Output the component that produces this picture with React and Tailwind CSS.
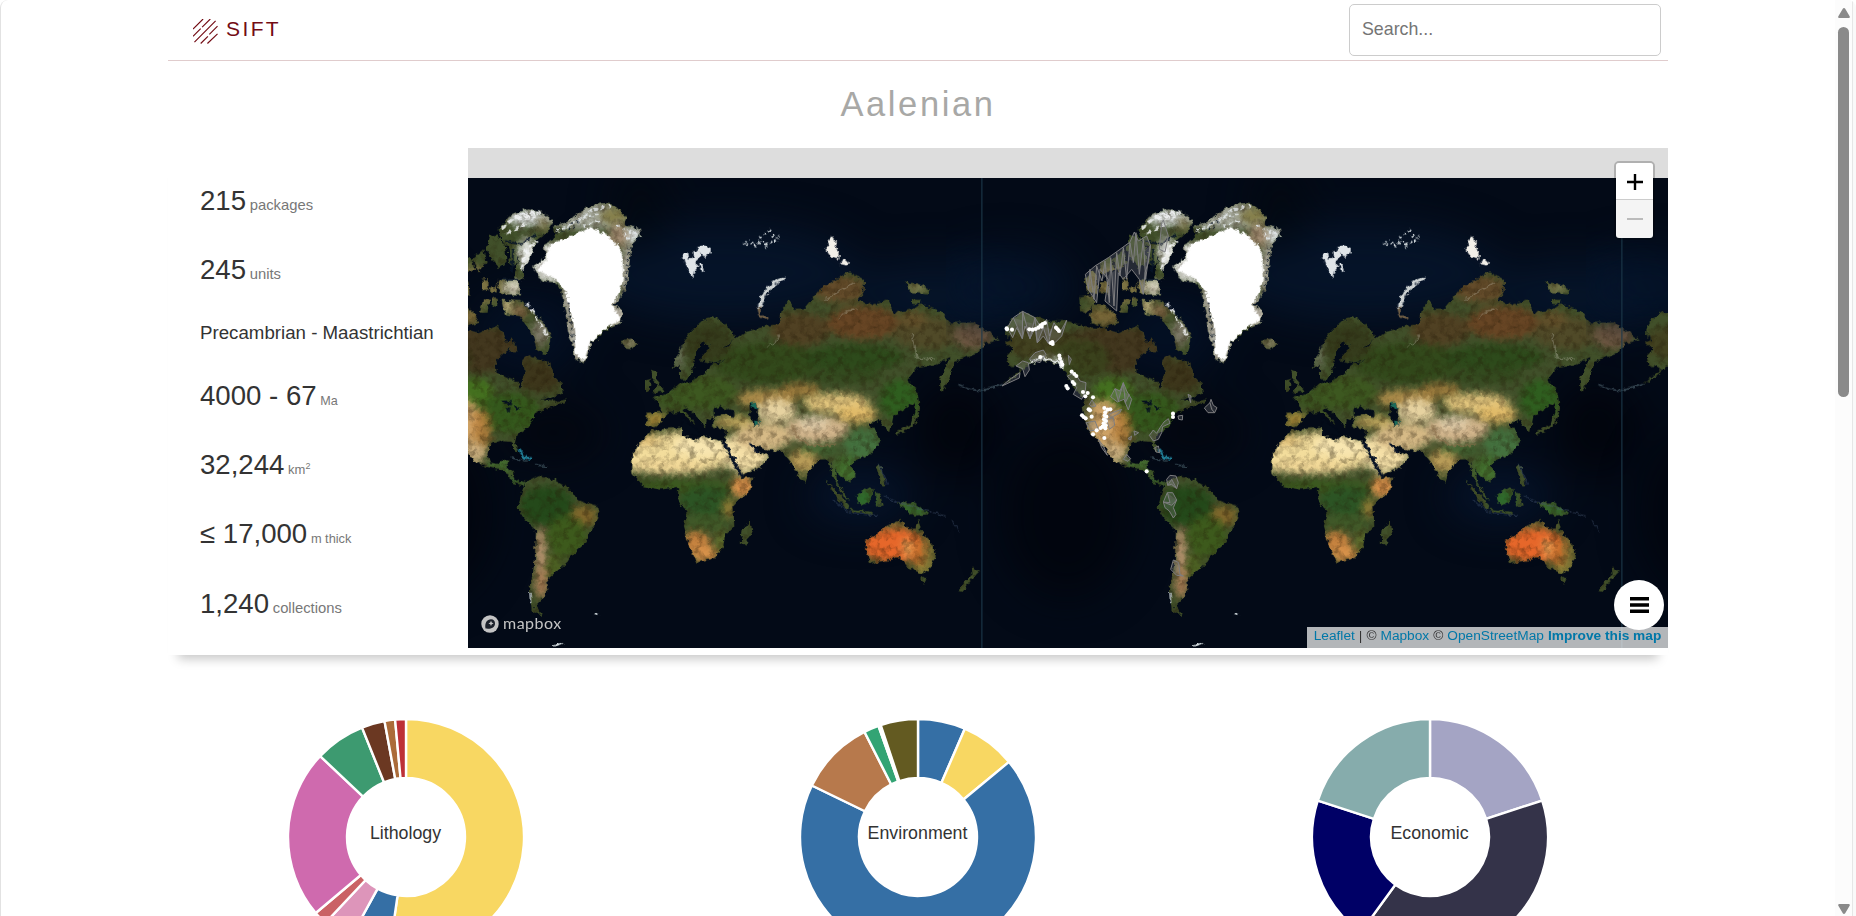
import React from "react";

const WEST_LAND = [
  "M78 590 100 580 78 565 82 540 95 520 128 498 170 512 215 528 260 524 330 545 370 548 410 560 450 550 470 540 490 560 500 590 515 575 522 600 492 620 465 645 470 680 500 695 530 705 540 730 548 700 555 680 550 640 565 628 600 640 625 650 640 690 665 715 668 742 640 752 600 762 645 766 678 760 672 772 640 780 610 790 585 802 575 825 555 850 530 868 525 890 536 912 528 922 515 888 480 885 450 895 442 925 450 950 475 955 490 940 505 945 495 965 515 975 520 1000 540 1010 560 1002 548 1018 520 1010 505 985 480 972 440 962 400 942 380 910 352 880 325 850 315 820 308 780 320 752 300 745 280 720 260 682 235 655 180 640 150 655 110 680 66 720 110 688 130 670 110 665 85 655 80 630 100 610Z",
  "M298 455 330 448 347 468 320 502 300 495Z",
  "M338 475 375 480 400 500 417 530 370 545 335 530 330 505Z",
  "M312 395 345 375 352 440 325 440Z",
  "M360 350 392 335 405 372 365 385Z",
  "M360 410 385 408 388 445 362 440Z",
  "M395 340 430 310 440 350 415 375Z",
  "M425 402 445 400 445 430 425 432Z",
  "M450 270 470 265 495 300 500 350 478 365 455 340 440 310Z",
  "M505 290 535 300 530 350 510 360Z",
  "M430 460 447 462 443 500 420 500Z",
  "M455 455 475 460 470 482 455 480Z",
  "M450 425 468 424 466 440 452 440Z",
  "M472 250 510 210 560 190 610 200 638 225 620 260 592 280 572 330 548 372 550 400 520 402 536 330 490 290Z",
  "M475 400 535 400 540 445 485 445 470 420Z",
  "M485 462 540 465 582 500 612 530 636 578 620 628 590 612 580 570 540 510 495 505Z",
  "M505 585 525 592 535 615 510 615Z",
];
const EAST_LAND = [
  "M258 240 300 230 330 205 370 180 415 170 445 180 480 215 470 235 520 248 522 270 495 295 488 350 480 420 465 450 440 480 468 492 462 530 415 555 375 590 352 652 325 635 318 590 305 560 300 520 285 440 268 410 225 405 200 360 240 335 230 295 265 275Z",
  "M175 1010 215 990 260 1000 310 1030 330 1060 395 1085 400 1105 380 1140 360 1185 330 1210 300 1250 265 1280 240 1300 245 1330 225 1360 205 1380 228 1412 195 1395 190 1330 205 1240 208 1150 175 1120 153 1085 165 1040Z",
  "M555 855 600 848 645 845 648 868 695 885 702 870 765 885 790 930 820 985 825 996 860 992 850 1030 800 1080 803 1140 775 1165 770 1200 745 1235 690 1250 665 1190 652 1140 660 1100 635 1060 635 1022 580 1030 530 1020 497 980 497 930 520 890Z",
  "M778 850 830 840 850 885 870 915 907 930 880 965 825 987 800 940 775 895Z",
  "M850 1125 857 1150 838 1195 822 1190 828 1150Z",
  "M540 800 587 798 575 770 560 755 600 745 640 712 665 710 720 682 728 660 775 645 780 605 805 580 830 560 900 540 940 535 945 490 965 465 985 492 1010 490 1030 465 1060 430 1110 400 1145 378 1192 402 1190 440 1170 462 1220 478 1262 460 1280 500 1340 490 1360 475 1420 495 1450 530 1520 530 1560 555 1600 580 1555 592 1540 620 1480 640 1462 650 1450 700 1425 738 1418 700 1450 635 1400 660 1350 665 1320 705 1350 730 1340 770 1280 810 1270 862 1240 825 1205 830 1230 860 1240 890 1210 925 1170 940 1150 960 1168 985 1150 1007 1120 990 1104 965 1112 1010 1150 1065 1128 1050 1095 985 1085 940 1055 940 1022 980 1018 1012 1002 1005 975 950 945 915 905 912 850 890 840 872 780 850 735 842 742 812 720 825 715 845 690 812 655 780 650 790 692 838 640 797 600 800 585 830 560 845 540 835Z",
  "M618 665 640 610 670 560 710 520 740 510 800 555 806 580 775 600 785 640 735 650 700 642 730 602 710 585 685 620 682 660 660 702 640 698 640 660Z",
  "M550 670 570 680 568 700 594 735 560 742 572 715 556 695Z",
  "M535 705 552 698 550 730 535 736Z",
  "M463 585 490 578 512 592 500 607 478 605Z",
  "M1195 1185 1235 1165 1260 1140 1300 1122 1325 1150 1345 1148 1355 1125 1370 1165 1400 1200 1407 1230 1392 1265 1365 1282 1325 1265 1300 1235 1250 1245 1210 1252 1200 1215Z",
  "M1360 1297 1380 1295 1370 1315Z",
  "M1515 1265 1535 1275 1515 1300 1490 1335 1478 1332 1500 1300 1518 1285Z",
  "M1168 1050 1200 1025 1222 1030 1210 1070 1180 1078Z",
  "M1075 1000 1095 1020 1148 1078 1140 1092 1110 1055Z",
  "M1145 1088 1215 1098 1215 1106 1150 1096Z",
  "M1225 1040 1240 1042 1248 1075 1228 1078Z",
  "M1290 1070 1345 1070 1385 1105 1340 1108 1310 1085Z",
  "M1228 960 1240 955 1258 1020 1245 1022Z",
  "M1340 740 1352 738 1360 790 1345 840 1285 868 1290 855 1332 835 1345 790Z",
  "M1320 410 1350 412 1392 432 1380 445 1330 438Z",
  "M1335 460 1365 462 1360 475 1338 474Z",
  "M1010 975 1022 985 1018 1010Z",
];
const WEST_TINT = [
  [400, 610, 180, 70, "#43381f", 1],
  [180, 590, 110, 50, "#42401f", 0.9],
  [300, 640, 90, 60, "#38431c", 0.8],
  [600, 690, 70, 50, "#3d361b", 1],
  [400, 740, 60, 45, "#44701f", 1],
  [510, 800, 90, 60, "#34581c", 1],
  [370, 830, 50, 70, "#cfa468", 1],
  [425, 850, 28, 60, "#c2853f", 0.8],
  [400, 920, 40, 30, "#dcba88", 0.9],
  [325, 795, 14, 45, "#6a653a", 0.7],
  [485, 960, 40, 18, "#427030", 1],
  [525, 1005, 30, 12, "#33642c", 1],
  [560, 215, 60, 25, "#dfe2e4", 0.9],
  [612, 235, 18, 22, "#8a8258", 0.9],
  [560, 320, 25, 45, "#ffffff", 0.9],
  [520, 425, 30, 25, "#f0e8d6", 0.9],
  [400, 420, 90, 60, "#96804f", 0.7],
  [500, 480, 16, 24, "#e2cf98", 0.9],
  [540, 495, 25, 20, "#8a6a4a", 0.9],
  [600, 560, 25, 40, "#8d8478", 0.8],
  [370, 510, 60, 25, "#7d683a", 0.9],
  [210, 645, 50, 10, "#e2e6e6", 0.8],
];
const EAST_TINT = [
  [360, 210, 130, 40, "#a3a698", 1],
  [440, 210, 40, 24, "#857f4a", 1],
  [455, 270, 30, 35, "#a08a70", 1],
  [505, 265, 25, 25, "#e8ecee", 1],
  [250, 350, 60, 60, "#dfe0da", 1],
  [490, 380, 30, 90, "#a9a698", 1],
  [455, 500, 30, 50, "#c2beb2", 1],
  [300, 500, 26, 90, "#9c9a8c", 1],
  [330, 600, 60, 60, "#b4b2a6", 1],
  [240, 1080, 80, 60, "#24491a", 1],
  [350, 1110, 40, 30, "#8a6a2c", 0.9],
  [300, 1170, 60, 60, "#3d5a1c", 1],
  [222, 1220, 14, 80, "#c49a76", 1],
  [225, 1310, 18, 45, "#b3835c", 1],
  [262, 1260, 26, 40, "#4f6420", 0.8],
  [640, 920, 175, 62, "#f3dd9c", 1],
  [700, 900, 80, 34, "#f8e6b0", 1],
  [540, 880, 40, 18, "#d9b870", 0.8],
  [600, 962, 130, 20, "#f3d898", 0.9],
  [640, 1022, 160, 20, "#3b5a1f", 1],
  [720, 1065, 80, 45, "#2c5424", 1],
  [828, 1022, 34, 32, "#dd934c", 1],
  [785, 1085, 18, 30, "#9a7f36", 0.9],
  [720, 1130, 70, 25, "#3f5a28", 0.9],
  [690, 1190, 40, 35, "#c5823f", 1],
  [715, 1225, 40, 25, "#d8924a", 1],
  [762, 1190, 12, 40, "#6d7a2e", 0.9],
  [835, 920, 70, 60, "#f6e1a8", 1],
  [640, 760, 70, 40, "#3b5421", 1],
  [565, 820, 30, 20, "#b0903c", 1],
  [720, 740, 90, 50, "#3d5820", 1],
  [900, 650, 160, 60, "#32491b", 1],
  [720, 590, 80, 60, "#353c1c", 1],
  [636, 620, 12, 60, "#8c8f80", 0.6],
  [1000, 550, 90, 50, "#504123", 1],
  [1120, 430, 80, 40, "#634b2a", 1],
  [1190, 530, 110, 50, "#674524", 1],
  [1160, 635, 150, 40, "#2d4a1b", 1],
  [1130, 690, 120, 22, "#344a1f", 1],
  [1380, 560, 100, 50, "#504a28", 1],
  [1520, 570, 60, 40, "#725a42", 1],
  [1340, 520, 40, 25, "#64502a", 0.9],
  [1300, 760, 60, 60, "#2f5e1f", 1],
  [900, 758, 90, 26, "#ad8c4a", 1],
  [1000, 732, 60, 20, "#a5803f", 0.9],
  [930, 795, 60, 35, "#e6d2a0", 1],
  [1110, 772, 100, 30, "#e4c77e", 1],
  [1170, 805, 60, 26, "#e0ba68", 1],
  [1050, 850, 95, 40, "#d2b58c", 1],
  [1040, 830, 45, 20, "#e8d6b4", 0.9],
  [890, 872, 85, 42, "#d6ba86", 1],
  [800, 828, 60, 18, "#c0a85e", 1],
  [1010, 945, 45, 36, "#b89c58", 1],
  [1060, 910, 60, 12, "#3f6a34", 0.9],
  [1190, 895, 60, 45, "#44723f", 1],
  [1140, 970, 40, 40, "#43702f", 1],
  [1190, 1060, 40, 30, "#2f6a2c", 1],
  [1340, 1090, 50, 20, "#35682c", 1],
  [1280, 1198, 95, 50, "#e6672a", 1],
  [1322, 1205, 14, 28, "#eeb060", 0.9],
  [1355, 1225, 20, 45, "#c8702c", 0.9],
  [1390, 1210, 16, 60, "#857636", 0.95],
  [1300, 1133, 50, 12, "#8a7038", 0.9],
  [1370, 1268, 25, 14, "#9a8a3a", 0.9],
  [490, 592, 24, 14, "#8f8468", 1],
  [1350, 425, 30, 12, "#8a8558", 1],
];
const OCEAN_TINT = [
  [80, 420, 200, 110, "#05142a"],
  [560, 560, 160, 120, "#041126"],
  [1150, 380, 420, 150, "#06152c"],
  [1780, 450, 260, 110, "#06152c"],
  [640, 860, 150, 90, "#02060e"],
  [1560, 1050, 160, 80, "#06152e"],
  [900, 180, 80, 140, "#020811"],
  [260, 1100, 200, 260, "#01050d"],
  [1850, 850, 120, 140, "#01030a"],
];
const AREAS = [
  "M316 385 345 360 385 335 420 310 450 288 463 258 475 285 500 270 512 300 505 350 495 380 490 445 478 400 455 370 430 400 415 380 410 495 375 465 385 400 360 370 350 470 325 430Z",
  "M325 430 330 370 342 460 350 360 366 405 375 345 388 470 392 335 402 480 410 320 420 390 430 305 440 400 450 290 460 350 468 260 478 385 490 280 497 400 510 300",
  "M538 310 545 230 550 222 565 270 555 318Z",
  "M82 545 100 515 128 496 165 515 180 540 200 520 208 570 222 530 240 560 260 523 245 570 225 590 205 592 190 570 172 590 165 545 150 578 135 540 127 578 110 545 98 575Z",
  "M100 515 127 578 128 496 150 578 165 515 172 590 190 545 205 592 215 550",
  "M66 720 92 698 120 680 118 696Z",
  "M108 660 128 645 145 650 148 672 135 692 128 668Z",
  "M148 640 165 620 190 612 198 625 180 650Z",
  "M265 628 274 640 268 656Z",
  "M262 690 285 680 300 705 318 710 316 735 305 760 280 745 290 725Z",
  "M328 775 336 762 348 780 335 782Z",
  "M392 752 405 728 420 735 430 710 440 735 455 760 445 792 432 760 412 768Z",
  "M405 728 415 765 430 710 436 770 448 745",
  "M385 805 410 795 425 790 418 802 392 815Z",
  "M318 830 345 825 355 850 330 855Z",
  "M380 820 400 815 404 838 388 850Z",
  "M355 880 365 905 382 928 370 900Z",
  "M462 855 476 860 464 868Z",
  "M508 868 520 852 530 862 540 845 552 828 565 818 570 832 548 842 545 860 535 880 520 885Z",
  "M524 905 535 900 540 920 528 918Z",
  "M594 810 608 808 607 822 596 820Z",
  "M624 745 633 750 632 770Z",
  "M673 786 690 770 693 760 700 778 711 785 704 800 684 800Z",
  "M690 770 695 790 704 800",
  "M430 940 440 925 452 938 444 946Z",
  "M444 878 455 870 452 882Z",
  "M560 1000 570 988 588 990 595 1010 590 1028 575 1015 563 1018Z",
  "M563 1018 575 1000 590 1028",
  "M550 1068 562 1040 578 1040 590 1062 580 1085 588 1105 580 1116 568 1095 555 1085Z",
  "M562 1040 570 1070 550 1068 575 1078 590 1062",
  "M572 1270 580 1242 596 1250 600 1285 610 1290 590 1288Z",
];
const SITES = [
  [80, 547], [81, 550], [96, 551], [148, 550], [158, 551], [167, 549], [175, 545], [182, 538], [188, 534], [195, 531], [185, 542],
  [228, 545], [233, 550], [237, 555], [212, 591], [217, 588], [218, 594], [181, 633], [238, 629], [240, 638], [244, 648], [247, 656],
  [275, 677], [283, 684], [289, 690], [278, 708], [283, 714], [259, 720], [263, 727], [309, 738], [323, 741], [316, 751], [339, 754],
  [326, 790], [330, 793], [306, 808], [311, 813], [317, 817], [335, 812], [373, 786], [383, 791], [391, 790], [376, 799], [374, 808],
  [379, 812], [372, 820], [378, 825], [371, 832], [377, 838], [368, 842], [376, 847], [362, 846], [350, 853], [339, 865], [373, 876],
  [579, 803], [579, 813], [500, 976],
];

function World() {
  return (
    <g id="world">
      <g filter="url(#haze)">
        {OCEAN_TINT.map(([x, y, rx, ry, c], i) => (
          <ellipse key={i} cx={x} cy={y} rx={rx} ry={ry} fill={c} opacity="0.85" />
        ))}
      </g>
      <g filter="url(#coast)">
        <g clipPath="url(#land)">
          <rect x="-20" y="90" width="2060" height="1420" fill="#41502a" />
          <g filter="url(#blend)">
            {WEST_TINT.map(([x, y, rx, ry, c, o], i) => (
              <ellipse key={i} cx={x} cy={y} rx={rx} ry={ry} fill={c} opacity={o} />
            ))}
            <g transform="translate(380 0)">
              {EAST_TINT.map(([x, y, rx, ry, c, o], i) => (
                <ellipse key={i} cx={x} cy={y} rx={rx} ry={ry} fill={c} opacity={o} />
              ))}
            </g>
          </g>
          <rect x="-20" y="90" width="2060" height="1420" filter="url(#relief)" />
        </g>
        <g transform="translate(380 0)">
          <path fill="#fff" d="M250 295 320 268 370 243 430 272 466 320 472 400 438 480 462 520 415 550 370 590 351 646 327 622 320 530 298 440 270 400 212 372 240 345Z" />
          <path fill="none" stroke="#dfe4e6" strokeWidth="6" strokeDasharray="10 9" d="M270 255 330 225 380 190 430 182 M300 245 350 215 400 205 M350 240 395 222 M450 240 500 262 515 258 M470 260 490 285" />
          <path fill="none" stroke="#0a1524" strokeWidth="4" strokeDasharray="7 12" d="M265 262 340 238 M310 232 345 222 M488 300 480 360 476 420 455 460 M478 235 520 245 M306 470 312 530 322 590" />
          <path fill="#dfe4e8" d="M647 320 664 320 668 345 682 330 680 312 700 316 704 332 688 345 692 360 684 372 676 398 668 375 656 358Z M688 306 708 298 732 306 732 318 716 332 704 322Z M698 352 708 354 715 376 703 378Z" />
          <path fill="none" stroke="#cfd6da" strokeWidth="7" strokeDasharray="8 8" d="M833 293 858 290 868 298 M865 304 880 284 900 292 M878 275 900 262 910 252 M895 300 915 290 930 282 M916 268 935 274" />
          <path fill="#f2efe8" d="M1083 285 1095 270 1108 288 1104 306 1119 322 1118 340 1095 335 1076 310 1088 304Z M1132 336 1147 350 1140 358 1120 354Z" />
          <path fill="none" stroke="#cfd4d4" strokeWidth="12" strokeLinecap="round" d="M948 399C910 415 890 440 880 482" />
          <path fill="none" stroke="#6d5c44" strokeWidth="9" d="M876 485 882 508 905 520" />
          <path fill="#030b18" d="M740 790 760 780 775 788 800 798 800 812 770 806 742 812Z M848 772 872 772 870 800 878 840 862 842 850 810Z M645 815 690 850 700 870 648 865Z" />
          <path fill="#1c6a5a" d="M852 772 870 770 872 784 856 788Z M862 820 876 825 876 840 864 842Z" />
          <path fill="none" stroke="#071226" strokeWidth="9" d="M772 888 824 988 M850 890 872 918" />
          <path fill="none" stroke="#4a5d78" strokeWidth="3" opacity=".6" d="M1100 1060 1150 1102 1230 1108 M1255 1050 1290 1068 1400 1100 1440 1110 M1235 950 1262 1015 M1455 1125 1480 1160" />
          <path fill="none" stroke="#c9c9b8" strokeWidth="3" opacity=".5" d="M1075 460 1165 410 M1120 515 1140 495 1175 490 M1335 560 1345 600 1350 635 1400 640 M905 600 925 590 942 560" />
          <path fill="none" stroke="#d8e0e4" strokeWidth="4" d="M190 1340 192 1372 M385 1402 398 1406 M262 1500 288 1492" />
          <path fill="none" stroke="#8a6f4c" strokeWidth="5" opacity=".7" d="M975 840 990 872 1020 892 1060 900 1105 896" />
        </g>
        <path fill="none" stroke="#e4e8e8" strokeWidth="7" d="M150 650 180 635 225 645 250 665" />
        <path fill="none" stroke="#f4f6f8" strokeWidth="8" strokeDasharray="16 8" opacity=".85" d="M485 245 540 205 600 200 M500 265 560 230 M530 215 590 212 M545 370 560 310 590 285 M560 470 600 530 625 575" />
        <path fill="none" stroke="#071428" strokeWidth="5" d="M495 285 540 295 590 265 M520 310 515 380 M540 402 480 400" />
        <path fill="#06111f" d="M485 765 520 762 515 775 495 772Z M500 785 512 780 508 805Z M520 780 545 785 530 795Z" />
        <path fill="none" stroke="#2ba0bb" strokeWidth="7" opacity=".8" d="M538 908 555 935 575 938" />
        <path fill="none" stroke="#536b76" strokeWidth="4" opacity=".7" d="M515 935 560 945 M585 955 620 962 M-65 715 -30 730 0 734 40 725 70 715" />
      </g>
      <rect x="3" y="96" width="5" height="1410" fill="#1b3949" opacity=".65" />
    </g>
  );
}

function SatelliteMap() {
  const region = { filterUnits: "userSpaceOnUse", x: -100, y: 60, width: 2180, height: 1480 };
  return (
    <svg className="block h-[470px] w-[1200px]" viewBox="0 30 1200 470">
      <defs>
        <clipPath id="land">
          <path d={WEST_LAND.join(" ")} />
          <path d={EAST_LAND.join(" ")} transform="translate(380 0)" />
        </clipPath>
        <filter id="haze" {...region} colorInterpolationFilters="sRGB"><feGaussianBlur stdDeviation="60" /></filter>
        <filter id="blend" {...region} colorInterpolationFilters="sRGB"><feGaussianBlur stdDeviation="11" /></filter>
        <filter id="coast" {...region} colorInterpolationFilters="sRGB">
          <feTurbulence type="fractalNoise" baseFrequency="0.07" numOctaves="2" seed="4" result="n" />
          <feDisplacementMap in="SourceGraphic" in2="n" scale="18" xChannelSelector="R" yChannelSelector="G" />
          <feGaussianBlur stdDeviation="1.5" />
        </filter>
        <filter id="relief" {...region} colorInterpolationFilters="sRGB">
          <feTurbulence type="fractalNoise" baseFrequency="0.045" numOctaves="4" seed="9" />
          <feColorMatrix values="0 0 0 0 0.14  0 0 0 0 0.1  0 0 0 0 0.03  1.1 0 0 0 -0.48" />
        </filter>
      </defs>
      <rect width="1200" height="500" fill="#030a17" />
      <g transform="translate(-128 -2) scale(.33333)"><World /></g>
      <use href="#world" transform="translate(512 -2) scale(.33333)" />
      <use href="#world" transform="translate(1152 -2) scale(.33333)" />
      <g transform="translate(512 -2) scale(.33333)">
        {AREAS.map((d, i) => (
          <path key={i} d={d} fill="#8a8a90" fillOpacity=".25" stroke="#7d7d80" strokeWidth="3" />
        ))}
        {SITES.map(([x, y], i) => (
          <circle key={i} cx={x} cy={y} r="6.2" fill="#fff" />
        ))}
      </g>
    </svg>
  );
}

function point(r, deg) {
  const a = ((deg - 90) * Math.PI) / 180;
  return `${(r * Math.cos(a)).toFixed(2)} ${(r * Math.sin(a)).toFixed(2)}`;
}

function Donut({ label, slices }) {
  let start = 0;
  return (
    <div className="flex w-[512px] justify-center">
      <svg className="h-[240px] w-[240px]" viewBox="-120 -120 240 240">
        {slices.map(([end, color]) => {
          const s = start;
          start = end;
          const big = end - s > 180 ? 1 : 0;
          return (
            <path
              key={end}
              fill={color}
              stroke="#fff"
              strokeWidth="2.4"
              d={`M${point(118, s)}A118 118 0 ${big} 1 ${point(118, end)}L${point(59, end)}A59 59 0 ${big} 0 ${point(59, s)}Z`}
            />
          );
        })}
        <text x="-0.5" y="2" textAnchor="middle" className="fill-[#333] text-[17.8px]">{label}</text>
      </svg>
    </div>
  );
}

const LITHOLOGY = [[188.2, "#f8d762"], [208.8, "#356fa5"], [223.2, "#dd95ba"], [229.9, "#ca6265"], [313.3, "#cf6aae"], [338.1, "#3d9a70"], [349.5, "#6b3822"], [354.7, "#ab6b39"], [360, "#bd3037"]];
const ENVIRONMENT = [[23.4, "#356fa5"], [50.5, "#f8d762"], [295.9, "#356fa5"], [333, "#b7794c"], [340.4, "#33a474"], [341.6, "#ffffff"], [360, "#635a21"]];
const ECONOMIC = [[72, "#a4a4c4"], [216, "#343349"], [288, "#000066"], [360, "#86acac"]];

function Stat({ value, unit, unitClass = "text-[14.8px]", className = "h-[69px]" }) {
  return (
    <div className={"whitespace-nowrap text-[27.6px] leading-[40px] " + className}>
      {value} <span className={"-ml-[4px] text-[#777] " + unitClass}>{unit}</span>
    </div>
  );
}

export default function App() {
  return (
    <div className="flex h-[916px] w-[1856px] overflow-hidden rounded-t-lg border-l border-[#e2e2e2] bg-white font-['Liberation_Sans',Arial,sans-serif] text-[#333]">
      <div className="flex w-[1834px] shrink-0 flex-col items-center">
        <div className="flex w-[1500px] flex-col">
          <header className="flex h-[61px] items-start justify-between border-b border-[#e0cccd] pl-[25px] pr-[7px] pt-1">
            <div className="flex items-start gap-[8px] pt-[13px] text-[#730c14]">
              <svg className="mt-[2px] h-[25px] w-[25px]" viewBox="0 0 26 26" fill="none" stroke="currentColor" strokeWidth="1.2">
                <path d="M0 10.500 10.500 0M0 18 8 10M9.500 8.500 18 0M1.500 24 23.500 2M8 25.500 15.500 18M17 16 25.500 7.500M15 25.500 25.500 15.500" />
              </svg>
              <span className="text-[21px] leading-6 tracking-[2.4px]">SIFT</span>
            </div>
            <div className="flex h-[52px] w-[312px] items-center rounded-[5px] border border-[#ccc] pb-0.5 pl-3 text-[17.8px] text-[#757575]">Search...</div>
          </header>
          <h1 className="flex h-[87px] items-center justify-center text-[34.5px] leading-none tracking-[2.6px] text-[#a8a8a6]">Aalenian</h1>
          <section className="flex h-[507px] shadow-[0_14px_10px_-10px_rgba(0,0,0,0.22)]">
            <div className="flex w-[300px] flex-col bg-white pl-8 pt-[33px]">
              <Stat value="215" unit="packages" />
              <Stat value="245" unit="units" className="h-[66px]" />
              <div className="h-[60px] whitespace-nowrap text-[18.7px] leading-[33px]">Precambrian - Maastrichtian</div>
              <Stat value="4000 - 67" unit="Ma" unitClass="text-[12.6px]" />
              <Stat value="32,244" unit={<>km<span className="relative -top-[5px] text-[9px]">2</span></>} unitClass="text-[13px]" />
              <Stat value="≤ 17,000" unit="m thick" unitClass="text-[12.8px]" className="h-[70px]" />
              <Stat value="1,240" unit="collections" />
            </div>
            <div className="relative h-[500px] w-[1200px] overflow-hidden bg-[#ddd] pt-[30px]">
              <SatelliteMap />
              <div className="absolute right-[13px] top-[13px] w-[41px] rounded-[5px] border-2 border-black/20 bg-clip-padding">
                <div className="flex h-[37px] items-center justify-center rounded-t-[3px] border-b border-[#ccc] bg-white pt-0.5">
                  <svg className="h-4 w-4" viewBox="0 0 16 16"><path d="M0 8H16M8 0V16" stroke="#000" strokeWidth="2.4" /></svg>
                </div>
                <div className="flex h-[38px] items-center justify-center rounded-b-[3px] bg-[#f4f4f4]">
                  <svg className="h-4 w-4" viewBox="0 0 16 16"><path d="M0 8H16" stroke="#bbb" strokeWidth="2" /></svg>
                </div>
              </div>
              <div className="absolute bottom-[15px] left-[13px] flex items-center gap-[4px] text-[#c4c4c4]">
                <svg className="h-[18px] w-[18px]" viewBox="0 0 18 18">
                  <circle cx="9" cy="9" r="8.700" fill="currentColor" />
                  <path d="M4.500 13.500C3.500 8 6 4.200 10 4.200A4.200 4.200 0 0 1 14 8.400C14 12.500 10 14.200 4.500 13.500Z" fill="#1c212b" />
                  <path d="M10 5.800 10.800 7.600 12.600 8.400 10.800 9.200 10 11 9.200 9.200 7.400 8.400 9.200 7.600Z" fill="currentColor" />
                </svg>
                <span className="-mt-[3px] font-[Lato,sans-serif] text-[16px] leading-5 tracking-[0.5px]">mapbox</span>
              </div>
              <div className="absolute bottom-0 right-0 flex h-[21px] w-[361px] items-center justify-center gap-[4px] whitespace-nowrap bg-white/70 pb-[2px] text-[13.7px] text-[#333]">
                <span className="text-[#0078a8]">Leaflet</span><span>|</span><span>©</span><span className="text-[#0078a8]">Mapbox</span><span>©</span><span className="text-[#0078a8]">OpenStreetMap</span><b className="text-[#0078a8]">Improve this map</b>
              </div>
              <div className="absolute bottom-[18px] right-[4px] flex h-[50px] w-[50px] items-center justify-center rounded-full bg-white">
                <svg className="h-4 w-[19px]" viewBox="0 0 19 16"><path d="M0 0H19V3.500H0ZM0 6.300H19V9.700H0ZM0 12.500H19V16H0Z" fill="#000" /></svg>
              </div>
            </div>
          </section>
        </div>
        <div className="flex justify-center pt-[62px]">
          <Donut label="Lithology" slices={LITHOLOGY} />
          <Donut label="Environment" slices={ENVIRONMENT} />
          <Donut label="Economic" slices={ECONOMIC} />
        </div>
      </div>
      <div className="flex h-[916px] w-[18px] shrink-0 flex-col items-center justify-between border-r border-[#e6e6e6] bg-[#fcfcfc] pb-[2px] pt-2">
        <div className="flex flex-col items-center gap-[9px]">
          <svg className="h-[10px] w-3" viewBox="0 0 12 10"><path d="M6 0Q6.800 0 7.200 .8L11.800 8.500Q12 10 11 10H1Q0 10 .2 8.500L4.800 .8Q5.200 0 6 0Z" fill="#8a8a8a" /></svg>
          <div className="h-[370px] w-[11px] rounded-full bg-[#8a8a8a]" />
        </div>
        <svg className="h-[10px] w-3 rotate-180" viewBox="0 0 12 10"><path d="M6 0Q6.800 0 7.200 .8L11.800 8.500Q12 10 11 10H1Q0 10 .2 8.500L4.800 .8Q5.200 0 6 0Z" fill="#8a8a8a" /></svg>
      </div>
      <div className="w-[3px] bg-[#f9f9f9]" />
    </div>
  );
}
